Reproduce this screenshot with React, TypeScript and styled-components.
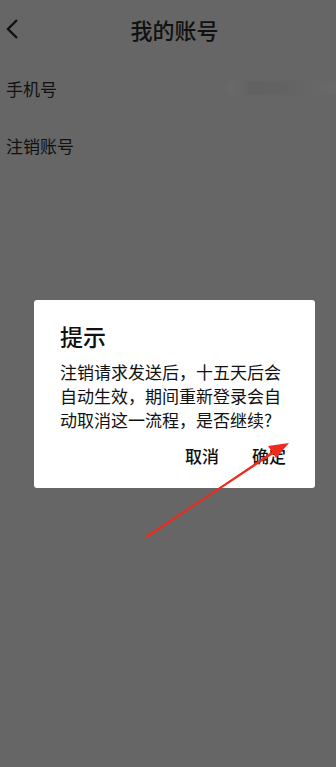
import React from "react";
import styled, { createGlobalStyle } from "styled-components";

const Global = createGlobalStyle`
  html, body { margin: 0; padding: 0; background: #666666; }
  body { font-family: "Noto Sans CJK SC", "Noto Sans", sans-serif; }
  * { box-sizing: border-box; }
`;

const Page = styled.div`
  position: relative;
  width: 336px;
  height: 767px;
  background: #666666;
  overflow: hidden;
  color: #111111;
`;

const Header = styled.div`
  height: 58px;
  display: flex;
  align-items: center;
  justify-content: center;
  position: relative;
`;

const Back = styled.div`
  position: absolute;
  left: 5px;
  top: 18px;
  width: 16px;
  height: 22px;
  display: flex;
`;

const Title = styled.div`
  font-size: 22px;
  font-weight: 500;
  line-height: 58px;
  padding-left: 13px;
`;

const Row = styled.div<{ $h: number }>`
  height: ${(p) => p.$h}px;
  display: flex;
  align-items: center;
  justify-content: space-between;
  padding-left: 6px;
  font-size: 17px;
`;

const Blur = styled.div`
  width: 108px;
  height: 14px;
  background: linear-gradient(90deg, #6b6b6b 0%, #626262 20%, #646464 60%, #6a6a6a 100%);
  filter: blur(1px);
`;

const Overlay = styled.div`
  position: absolute;
  inset: 0;
  display: flex;
  align-items: flex-start;
  padding: 300px 21px 0 34px;
`;

const Dialog = styled.div`
  width: 281px;
  height: 188px;
  background: #ffffff;
  border-radius: 3px;
  padding: 20px 26px 0 26px;
  display: flex;
  flex-direction: column;
  color: #111111;
`;

const DTitle = styled.div`
  font-size: 23px;
  font-weight: 500;
  line-height: 32px;
`;

const DBody = styled.div`
  margin-top: 8px;
  font-size: 17px;
  line-height: 24px;
  width: 230px;
`;

const Buttons = styled.div`
  margin-top: 11px;
  display: flex;
  justify-content: flex-end;
  gap: 33px;
  padding-right: 3px;
`;

const Btn = styled.div`
  font-size: 17px;
  font-weight: 500;
  line-height: 26px;
`;

const Arrow = styled.svg`
  position: absolute;
  left: 0;
  top: 0;
  pointer-events: none;
`;

export default function App() {
  return (
    <Page>
      <Global />
      <Header>
        <Back>
          <svg width="16" height="22" viewBox="0 0 16 22">
            <path d="M12 2 L3 11 L12 20" fill="none" stroke="#111" strokeWidth="2.4" />
          </svg>
        </Back>
        <Title>我的账号</Title>
      </Header>
      <Row $h={60}>
        <span>手机号</span>
        <Blur />
      </Row>
      <Row $h={54}>
        <span>注销账号</span>
      </Row>
      <Overlay>
        <Dialog>
          <DTitle>提示</DTitle>
          <DBody>注销请求发送后，十五天后会自动生效，期间重新登录会自动取消这一流程，是否继续?</DBody>
          <Buttons>
            <Btn>取消</Btn>
            <Btn>确定</Btn>
          </Buttons>
        </Dialog>
      </Overlay>
      <Arrow width="336" height="767" viewBox="0 0 336 767">
        <path d="M146 537 L276 451" stroke="#f02a1e" strokeWidth="2" strokeLinecap="round" fill="none" />
        <path d="M148 537 L272 452" stroke="#f02a1e" strokeWidth="1" fill="none" />
        <polygon points="289,443 268,446 276,458" fill="#f02a1e" />
      </Arrow>
    </Page>
  );
}
